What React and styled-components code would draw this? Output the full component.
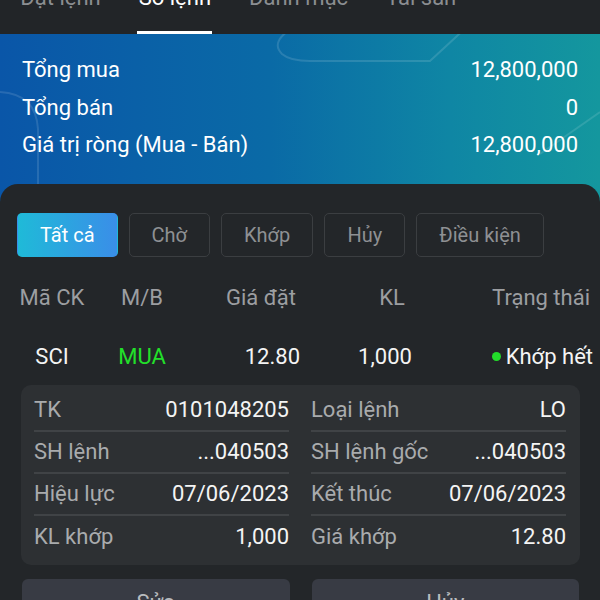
import React from "react";
import styled, { createGlobalStyle } from "styled-components";

const GlobalStyle = createGlobalStyle`
  html, body {
    margin: 0;
    padding: 0;
    background: #232629;
  }
  body {
    font-family: Roboto, "Noto Sans", "Liberation Sans", sans-serif;
  }
  * { box-sizing: border-box; }
`;

const tabs = ["Đặt lệnh", "Sổ lệnh", "Danh mục", "Tài sản"];
const filters = ["Tất cả", "Chờ", "Khớp", "Hủy", "Điều kiện"];

const summary = [
  ["Tổng mua", "12,800,000"],
  ["Tổng bán", "0"],
  ["Giá trị ròng (Mua - Bán)", "12,800,000"],
];

const leftDetails = [
  ["TK", "0101048205"],
  ["SH lệnh", "...040503"],
  ["Hiệu lực", "07/06/2023"],
  ["KL khớp", "1,000"],
];

const rightDetails = [
  ["Loại lệnh", "LO"],
  ["SH lệnh gốc", "...040503"],
  ["Kết thúc", "07/06/2023"],
  ["Giá khớp", "12.80"],
];

function Decor() {
  return (
    <DecorSvg viewBox="0 0 600 150" preserveAspectRatio="none">
      <path
        d="M300 -10 Q268 6 282 20 Q290 27 310 27 L430 27 L470 -10"
        fill="none"
        stroke="rgba(255,255,255,0.13)"
        strokeWidth="2"
      />
      <path
        d="M0 58 Q36 60 38 95 L38 150"
        fill="none"
        stroke="rgba(255,255,255,0.12)"
        strokeWidth="2"
      />
      <path
        d="M540 120 L600 78"
        fill="none"
        stroke="rgba(255,255,255,0.12)"
        strokeWidth="2"
      />
    </DecorSvg>
  );
}

function DetailColumn({ rows }) {
  return (
    <Column>
      {rows.map(([label, value]) => (
        <DetailRow key={label}>
          <Label>{label}</Label>
          <Value>{value}</Value>
        </DetailRow>
      ))}
    </Column>
  );
}

export default function App() {
  return (
    <Page>
      <GlobalStyle />
      <TabBar>
        {tabs.map((t, i) => (
          <Tab key={t} $active={i === 1}>
            {t}
          </Tab>
        ))}
      </TabBar>
      <Hero>
        <Decor />
        <Summary>
          {summary.map(([label, value]) => (
            <SummaryRow key={label}>
              <span>{label}</span>
              <span>{value}</span>
            </SummaryRow>
          ))}
        </Summary>
        <Panel>
          <Filters>
            {filters.map((f, i) => (
              <FilterButton key={f} $active={i === 0}>
                {f}
              </FilterButton>
            ))}
          </Filters>
          <TableRow $head>
            <Cell $w="104px" $align="center">Mã CK</Cell>
            <Cell $w="76px" $align="center">M/B</Cell>
            <Cell $w="116px" $align="right">Giá đặt</Cell>
            <Cell $w="192px" $align="center">KL</Cell>
            <Cell $align="right">Trạng thái</Cell>
          </TableRow>
          <TableRow>
            <Cell $w="104px" $align="center">SCI</Cell>
            <Cell $w="76px" $align="center" $color="#22e02a">MUA</Cell>
            <Cell $w="120px" $align="right">12.80</Cell>
            <Cell $w="170px" $align="center">1,000</Cell>
            <Cell $align="right">
              <Dot />
              Khớp hết
            </Cell>
          </TableRow>
          <DetailCard>
            <DetailColumn rows={leftDetails} />
            <DetailColumn rows={rightDetails} />
          </DetailCard>
          <Actions>
            <ActionButton>Sửa</ActionButton>
            <ActionButton>Hủy</ActionButton>
          </Actions>
        </Panel>
      </Hero>
    </Page>
  );
}

const Page = styled.div`
  width: 600px;
  height: 600px;
  overflow: hidden;
  background: #232629;
  color: #f2f2f2;
`;

const TabBar = styled.div`
  height: 34px;
  display: flex;
  gap: 38px;
  padding-left: 20px;
  background: #222528;
  overflow: hidden;
`;

const Tab = styled.div`
  position: relative;
  margin-top: -14px;
  height: 48px;
  font-size: 22px;
  line-height: 24px;
  color: ${(p) => (p.$active ? "#ffffff" : "#8b8e91")};
  white-space: nowrap;

  &::after {
    content: "";
    display: ${(p) => (p.$active ? "block" : "none")};
    position: absolute;
    left: -2px;
    right: -1px;
    top: 45px;
    height: 3px;
    background: #ffffff;
  }
`;

const Hero = styled.div`
  position: relative;
  background: linear-gradient(90deg, #0a56a8 0%, #0a6aa6 45%, #0f86a4 75%, #14979e 100%);
`;

const DecorSvg = styled.svg`
  position: absolute;
  left: 0;
  top: 0;
  width: 600px;
  height: 150px;
  pointer-events: none;
`;

const Summary = styled.div`
  position: relative;
  padding: 17px 22px 20px 22px;
`;

const SummaryRow = styled.div`
  display: flex;
  justify-content: space-between;
  align-items: center;
  height: 37.5px;
  font-size: 22px;
  color: #ffffff;
`;

const Panel = styled.div`
  position: relative;
  background: #232629;
  border-radius: 18px 18px 0 0;
  padding: 29px 0 0 0;
  min-height: 420px;
`;

const Filters = styled.div`
  display: flex;
  gap: 11px;
  padding-left: 17px;
`;

const FilterButton = styled.div`
  height: 44px;
  padding: 0 22px;
  display: flex;
  align-items: center;
  justify-content: center;
  min-width: 81px;
  border-radius: 5px;
  font-size: 20px;
  color: ${(p) => (p.$active ? "#ffffff" : "#8e9093")};
  border: 1px solid ${(p) => (p.$active ? "transparent" : "#3b3e41")};
  background: ${(p) =>
    p.$active ? "linear-gradient(90deg, #1fbad8 0%, #3a8ee8 100%)" : "transparent"};
`;

const TableRow = styled.div`
  display: flex;
  align-items: center;
  height: 40px;
  padding-right: ${(p) => (p.$head ? "10px" : "7px")};
  margin-top: ${(p) => (p.$head ? "21px" : "19px")};
  font-size: 22px;
  color: ${(p) => (p.$head ? "#9c9ea1" : "#f4f4f4")};
`;

const Cell = styled.div`
  width: ${(p) => p.$w || "auto"};
  flex: ${(p) => (p.$w ? "none" : "1")};
  display: flex;
  align-items: center;
  justify-content: ${(p) =>
    p.$align === "right" ? "flex-end" : p.$align === "center" ? "center" : "flex-start"};
  color: ${(p) => p.$color || "inherit"};
  white-space: nowrap;
`;

const Dot = styled.span`
  width: 9px;
  height: 9px;
  border-radius: 50%;
  background: #22dd2a;
  margin-right: 5px;
`;

const DetailCard = styled.div`
  margin: 8px 20px 0 21px;
  padding: 5px 14px 7px 13px;
  background: #2d3033;
  border-radius: 10px;
  display: grid;
  grid-template-columns: 1fr 1fr;
  column-gap: 22px;
`;

const Column = styled.div`
  display: flex;
  flex-direction: column;
`;

const DetailRow = styled.div`
  height: 42px;
  display: flex;
  align-items: center;
  justify-content: space-between;
  font-size: 22px;
  border-bottom: 2px solid #404346;

  &:last-child {
    border-bottom: none;
  }
`;

const Label = styled.span`
  color: #a9abad;
`;

const Value = styled.span`
  color: #f4f4f4;
`;

const Actions = styled.div`
  margin: 14px 21px 0 22px;
  display: grid;
  grid-template-columns: 1fr 1fr;
  column-gap: 22px;
`;

const ActionButton = styled.div`
  height: 50px;
  border-radius: 6px;
  background: #383b44;
  color: #b9bbbf;
  font-size: 22px;
  display: flex;
  justify-content: center;
  padding-top: 11px;
`;
